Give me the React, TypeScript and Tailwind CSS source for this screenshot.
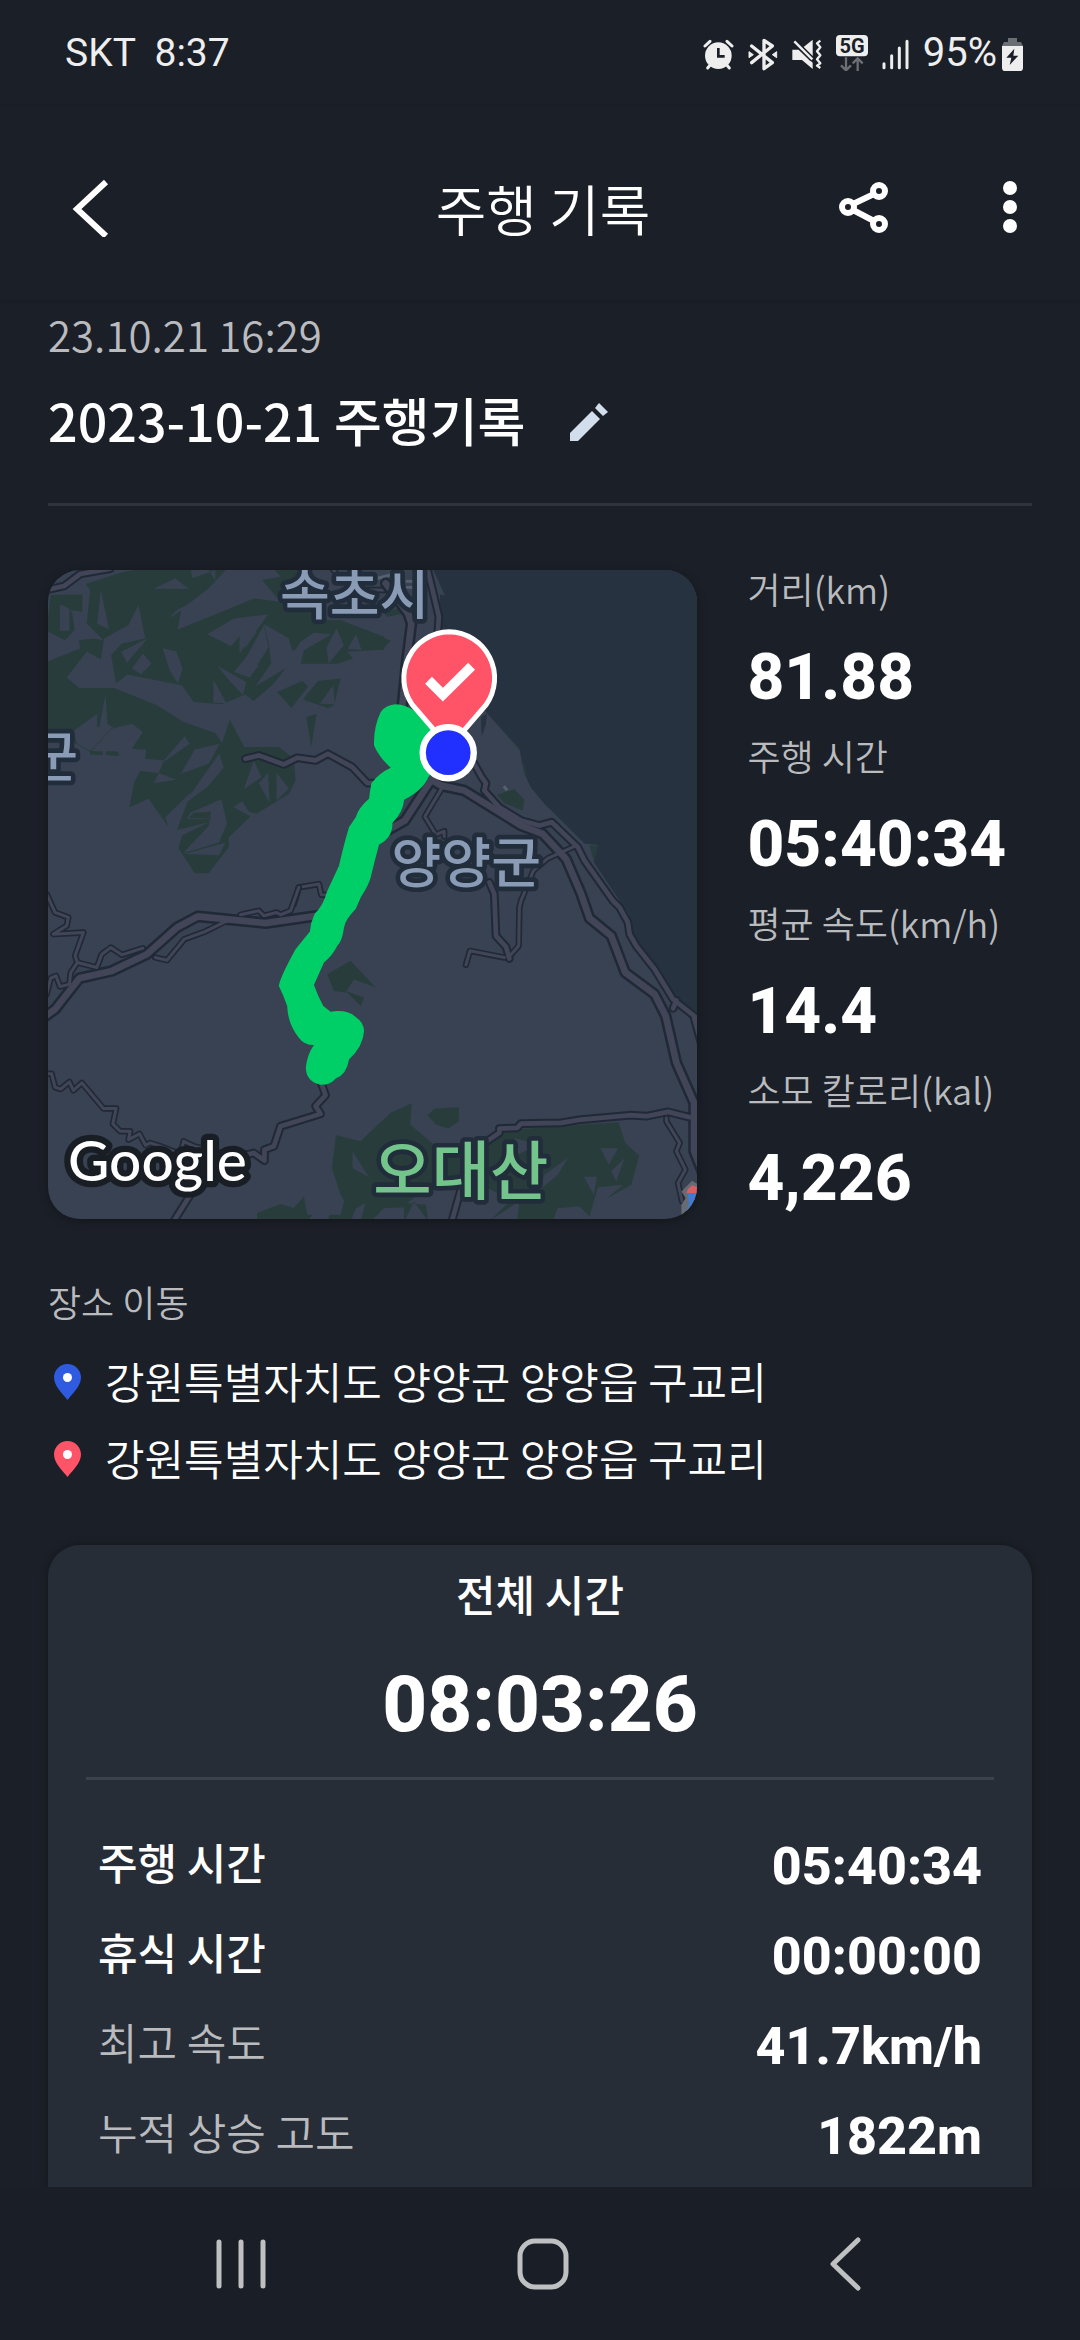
import type { ReactNode } from "react";

const KR = "font-['Noto_Sans_CJK_KR',sans-serif]";
const NUM = "font-['Roboto',sans-serif]";

const LAND = "#384252";
const SEA = "#263240";
const FOREST = "#283d3b";
const ROAD = "#424557";
const CASING = "#202936";

type Road = { d: string; size: "s" | "m" | "l" };

const casingWidth = { s: 19, m: 26, l: 35 };
const roadWidth = { s: 9, m: 14, l: 20 };

function Roads({ roads }: { roads: Road[] }) {
  return (
    <g fill="none" strokeLinejoin="round" strokeLinecap="round">
      {roads.map((r) => (
        <path key={"c" + r.d} d={r.d} stroke={CASING} strokeWidth={casingWidth[r.size]} />
      ))}
      {roads.map((r) => (
        <path key={"r" + r.d} d={r.d} stroke={ROAD} strokeWidth={roadWidth[r.size]} />
      ))}
    </g>
  );
}

const northWestRoads: Road[] = [
  { size: "m", d: "M10 92L72 78L120 42L210 26" },
  { size: "m", d: "M615 595L655 585L730 612L770 592L825 600L862 580L935 620L980 668L1030 668" },
  { size: "s", d: "M760 1030L775 980L835 970L842 1002L870 1003" },
  { size: "s", d: "M872 22L895 50L960 90L1040 90" },
];

const eastRoads: Road[] = [
  { size: "s", d: "M220 828V812L195 822L162 768L215 680" },
  { size: "s", d: "M615 855L530 893L487 930L450 1020L445 1040L443 1155L412 1190" },
  { size: "m", d: "M355 965L370 1000L375 1125L405 1158L415 1193" },
  { size: "s", d: "M285 1212L297 1170L400 1190" },
  { size: "l", d: "M45 70L112 160L122 190L108 300L93 450" },
  { size: "m", d: "M168 20L190 110L204 170L200 230" },
  { size: "l", d: "M180 660L102 780L40 815" },
  { size: "m", d: "M310 610L332 650L345 668L340 690L385 740L450 780L505 795L542 785L620 860L640 900L725 1020L745 1040L770 1085L775 1120L795 1155L850 1225L905 1315L985 1378" },
  { size: "m", d: "M915 1318L905 1342" },
  { size: "m", d: "M968 1370L990 1450" },
  { size: "l", d: "M150 640L210 675L280 690L450 795L515 820L585 895L630 1000L655 1072L720 1125L762 1235L850 1300L883 1365L915 1505L968 1625V1770L1000 1850" },
  { size: "m", d: "M345 1742L385 1715V1702L438 1700L450 1687L570 1685L630 1675L775 1662L825 1665L890 1652L955 1668" },
  { size: "s", d: "M885 1670V1680L925 1745L915 1770L942 1825L920 1865L932 1920" },
  { size: "m", d: "M268 1890L240 1990" },
];

const southWestRoads: Road[] = [
  { size: "s", d: "M20 10L45 65L85 80L80 105L40 130L130 125L105 195L112 215L92 245L88 280L60 287L48 255L32 262L20 310" },
  { size: "s", d: "M112 215L170 230L185 190L212 170L245 192L308 172" },
  { size: "s", d: "M345 200L380 208L432 145L495 122L560 90" },
  { size: "s", d: "M600 72L655 60L670 75L708 65L720 72L750 60L775 -10" },
  { size: "l", d: "M10 380L45 355L118 262L215 240L320 190L410 110L472 77L675 97L850 72" },
  { size: "s", d: "M15 548H35L45 588L62 594L88 572L100 598L125 575L190 652H228L218 698L240 720H270L265 745L298 728L316 762L330 755L360 765L420 788L430 750L462 765L560 790L640 785" },
  { size: "m", d: "M840 570L855 612L825 645L840 668L720 705L700 765L672 775V808L640 785L590 798" },
  { size: "m", d: "M450 910L400 990" },
];

function RouteMap() {
  return (
    <svg
      viewBox="0 0 1944 1944"
      className="block aspect-square w-full rounded-[32px]"
      role="img"
      aria-label="주행 경로 지도"
    >
      <rect width="1944" height="1944" fill={LAND} />

      {/* sea */}
      <g transform="translate(966 -30)">
        <path
          fill={SEA}
          d="M183 20L222 106L207 103L212 220L345 455L445 565L460 640L480 682L520 730L640 849L680 853L668 905L745 1020L773 1060L778 1110L850 1212L910 1310L1000 1380V0H183Z"
        />
        <path fill={FOREST} d="M345 455L445 563L448 572L395 512ZM456 600L470 655L458 635ZM378 703L430 686L460 718L455 750L400 728ZM-10 213L60 242L35 268L-10 268ZM40 160L90 140L100 160L50 170ZM655 855H680L668 903Z" />
        <path fill={SEA} d="M330 470L348 460L345 490L332 530Z" />
        <path fill="#55606f" d="M395 680L402 674L412 686L405 692ZM20 50L65 38V48L20 60ZM105 60H150V68H105ZM105 78H150V86H105Z" />
      </g>

      {/* northern forest */}
      <g transform="translate(-24 -30)">
        <path
          fill={FOREST}
          d="M137 72L240 38L300 26H560L505 85L440 135L410 150L385 175L422 152L412 208L545 155L640 115L720 125L665 60L720 50L700 26H800L860 180H900L1030 230V268L920 275L937 295L890 311H780L790 272L840 225H880L755 272L745 235L670 192L685 250L692 310L645 378L735 325L698 372L640 422L615 403L545 432L460 425L425 375L260 343L228 370L213 285L245 250L328 232L315 235L295 135L265 195L192 235L182 297L140 275L80 352L118 383H222L350 435L430 485L525 518L545 548L568 478L612 560H715L760 595L765 660L745 700L648 760L580 740L630 768L565 830V860L505 938H463L415 862L425 825L505 785L410 808L452 695L375 770L385 800L325 715L268 740L282 665L300 632L355 638L372 600L315 595L318 568L275 565L308 515L275 490L215 505L150 575L110 550L20 520V305L120 265L117 240L160 235L190 240L140 190L150 90Z"
        />
        <path fill={FOREST} d="M32 105L127 103V155L90 150L120 192L75 240L20 213ZM710 395L785 362L803 378L753 443ZM787 418L832 362L900 355L880 435L863 444ZM797 470L828 460L812 558ZM150 572L188 573V584L150 582ZM198 572L235 574V587L198 584ZM415 862L565 846L536 886L428 882Z" />
        <path
          fill={LAND}
          d="M182 90L207 208L171 190ZM60 133L88 145V212H60ZM95 150L120 192L105 212ZM340 86L405 55L446 87ZM452 30H505L525 62V30L456 55ZM243 275L322 235L260 308ZM275 325L308 280L334 310L303 342ZM367 264L408 274L427 325L413 370L388 330ZM500 222L580 175L683 163L597 280V228L572 258ZM597 228L650 214L615 262L597 242ZM670 196L684 262L652 312L620 290L655 315L628 352L580 335L618 290ZM530 316L617 365L608 404L570 365ZM519 358L558 428L519 427ZM888 204L909 255L864 311L858 262ZM946 222L963 270L921 266ZM790 270L760 275L780 245L820 218L873 222ZM838 430L878 374L882 432ZM196 403L202 490L220 504H177ZM100 512L171 461V500L215 503L150 572L110 548ZM367 605L433 528L448 550L372 603ZM463 567L538 550L505 610L422 640ZM536 580L550 622L500 680L425 735L455 695ZM340 668L356 638L408 658ZM452 755L543 716L560 788L536 846L428 878L505 796L508 774L440 772ZM512 754L460 757L440 776L510 776ZM640 600L663 650L610 686ZM655 668L683 637L687 727ZM708 637L745 684L708 720ZM432 880L555 846L536 884ZM578 740L606 722L632 765Z"
        />
      </g>

      {/* southern forest */}
      <g transform="translate(966 960)">
        <path
          fill={FOREST}
          d="M-10 730L60 665L123 636L118 700L195 765H320L400 715L475 712L640 700L742 693L762 755L804 793L780 880L705 923L755 880L680 888L655 975L625 945L560 950L545 990H438L445 930L360 985L420 925L330 880L250 890L200 860L110 935L165 940L172 990L130 930L100 990V948L40 950L0 990H-30L-16 935L-60 960L-90 910L-116 830L-104 732L-30 750ZM170 672L192 652L264 648V690L232 712L195 700ZM270 722L302 693Z"
        />
        <path fill={FOREST} d="M-340 965L-270 938L-230 950L-200 915L-190 970H-90L-80 930L-40 940L-60 990H-340ZM-130 250L-60 210L15 290L-50 265L-75 305L-110 300ZM-75 300L-20 320L-30 345Z" />
        <path fill={LAND} d="M687 770L740 772L713 820ZM638 856H677L668 910ZM520 850L590 800L560 850L500 900ZM-54 780L-5 858L-55 830ZM430 740L500 760L440 790ZM-190 990L-150 940L-100 900L-130 990ZM760 800L735 870L720 840Z" />
      </g>

      <g transform="translate(-24 -30)"><Roads roads={northWestRoads} /></g>
      <g transform="translate(-24 960)"><Roads roads={southWestRoads} /></g>
      <g transform="translate(966 -30)"><Roads roads={eastRoads} /></g>

      {/* place names */}
      <g
        className={KR}
        fontSize="162"
        fontWeight="500"
        fill="#8a9bb5"
        stroke="#222d3b"
        strokeWidth="28"
        strokeLinejoin="round"
        paintOrder="stroke"
      >
        <text x="918" y="136" textAnchor="middle">속초시</text>
        <text x="90" y="620" textAnchor="end">군</text>
        <text x="1252" y="936" textAnchor="middle">양양군</text>
        <text x="1236" y="1868" textAnchor="middle" fontSize="190" fill="#74c58b">오대산</text>
      </g>

      {/* ridden route */}
      <g transform="translate(966 -30)">
        <path
          fill="#00cf68"
          d="M75 432Q105 432 135 455L190 510L230 580L172 650Q160 685 100 718Q97 755 65 787Q66 832 25 852Q12 900 0 950Q-5 972 -30 1010L-45 1045Q-75 1075 -80 1100Q-85 1140 -100 1155Q-115 1185 -140 1205L-170 1272Q-158 1305 -142 1335L-120 1352Q-70 1345 -45 1368Q-20 1385 -20 1410Q-22 1455 -65 1495Q-72 1540 -105 1552Q-120 1572 -150 1571Q-195 1560 -194 1518Q-190 1480 -170 1452Q-200 1452 -215 1430Q-248 1390 -250 1335Q-262 1300 -275 1275Q-272 1250 -225 1165L-182 1112Q-180 1085 -168 1060Q-140 1030 -132 995L-95 915Q-80 850 -65 800L-45 770Q-35 740 -5 715Q-2 690 2 668Q25 638 60 622Q25 590 10 555Q8 500 30 455Q45 434 75 432Z"
        />
        <path
          fill="#ff5368"
          stroke="#fff"
          strokeWidth="15"
          d="M235 215A138.500 138.500 0 0 1 345 434L235 562L125 434A138.500 138.500 0 0 1 235 215Z"
        />
        <path fill="none" stroke="#fff" strokeWidth="29" d="M173 360L216 403L302 318" />
        <circle cx="232" cy="577" r="76.500" fill="#2230ff" stroke="#fff" strokeWidth="19" />
      </g>

      <text
        x="60"
        y="1829"
        className="font-['Lato',sans-serif]"
        fontSize="170"
        fontWeight="500"
        fill="#fff"
        stroke="#191e25"
        strokeWidth="38"
        strokeLinejoin="round"
        paintOrder="stroke"
      >
        Google
      </text>

      {/* highway shield cut by the map's corner */}
      <g transform="translate(966 960)">
        <path fill="#676b72" d="M930 900L962 868L990 885V990H930V940L943 920Z" />
        <path fill="#d85f63" d="M945 905Q948 893 962 882L990 892V908Z" />
        <path fill="#3f7bd0" d="M948 906H990V985H935L953 938Z" />
      </g>
    </svg>
  );
}

function StatusIcons() {
  return (
    <div className="flex items-center gap-3 text-[#eeeeee]" aria-hidden="true">
      <svg viewBox="60 39 96 108" className="h-9 w-8">
        <circle cx="106" cy="101" r="40" fill="currentColor" />
        <path d="M66 72L81 58M147 72L132 58" stroke="currentColor" strokeWidth="9" strokeLinecap="round" />
        <path d="M74 138L84 126M139 138L129 126" stroke="currentColor" strokeWidth="9" strokeLinecap="round" />
        <path d="M106 78V103H125" fill="none" stroke="#1a1e26" strokeWidth="8" />
      </svg>
      <svg viewBox="192 39 96 108" className="h-9 w-8">
        <path
          d="M206 72L268 122L243 140V55L268 72L206 122"
          fill="none"
          stroke="currentColor"
          strokeWidth="10"
          strokeLinejoin="round"
          strokeLinecap="round"
        />
        <path d="M198 89L211 98L198 107ZM281 89L268 98L281 107Z" fill="currentColor" stroke="currentColor" strokeWidth="3" />
      </svg>
      <svg viewBox="324 39 96 108" className="h-9 w-8">
        <path d="M361 76L389 53V104Z" fill="currentColor" />
        <path d="M328 83H347L389 122V141L357 114H328Z" fill="currentColor" />
        <path d="M334 58L388 112" stroke="#1a1e26" strokeWidth="16" />
        <path d="M334 58L388 112" stroke="currentColor" strokeWidth="7" />
        <path d="M412 56L402 64L412 76L402 88L412 100L402 112L412 124L402 131L412 138" fill="none" stroke="currentColor" strokeWidth="7" strokeLinejoin="round" />
      </svg>
      <svg viewBox="462 39 102 108" className="h-9 w-[34px]">
        <rect x="465" y="39" width="96" height="64" rx="12" fill="currentColor" />
        <text x="513" y="93" textAnchor="middle" fontSize="60" fontWeight="700" fill="#1a1e26" className="font-['Roboto',sans-serif]">5G</text>
        <path d="M495 106V143M480 130L495 145L510 130M530 147V112M515 124L530 109L545 124" fill="none" stroke="#6b6e73" strokeWidth="7" />
      </svg>
      <svg viewBox="597 39 90 108" className="h-9 w-[30px]">
        <path d="M606 125V137M629 101V137M652 78V137M675 58V137" stroke="currentColor" strokeWidth="9" strokeLinecap="round" />
      </svg>
      <div className="flex items-center gap-1">
        <span className={`${NUM} text-[40px] leading-[48px]`}>95%</span>
        <svg viewBox="960 39 69 108" className="h-9 w-[23px]">
          <path d="M981 48H1008V60H1020L1026 72H963L969 60H981Z" fill="#6b6e73" />
          <path d="M963 72H1026V137Q1026 147 1016 147H973Q963 147 963 137Z" fill="currentColor" />
          <path d="M1000 80L976 107H991L986 129L1012 101H997Z" fill="#1a1e26" />
        </svg>
      </div>
    </div>
  );
}

function PlacePin({ color }: { color: string }) {
  return (
    <svg viewBox="0 0 27 36" className="mt-1 h-9 w-[27px]" aria-hidden="true">
      <path fill={color} d="M13.500 0C6 0 0 6 0 13.500C0 22 8 29 13.500 36C19 29 27 22 27 13.500C27 6 21 0 13.500 0Z" />
      <circle cx="13.500" cy="13.500" r="4.500" fill="#fff" />
    </svg>
  );
}

function Metric({ label, value }: { label: string; value: string }) {
  return (
    <div className="flex flex-col gap-10">
      <dt className="text-[36px] leading-[36px] font-[350] whitespace-nowrap text-[#b9bbbe]">{label}</dt>
      <dd className={`${NUM} text-[64px] leading-[64px] font-extrabold`}>{value}</dd>
    </div>
  );
}

function DetailRow({ label, value, strong }: { label: string; value: string; strong?: boolean }) {
  return (
    <div className="flex h-[90px] items-center justify-between">
      <dt className={strong ? "text-[43px] leading-[56px] font-medium" : "text-[43px] leading-[56px] font-[350] text-[#b9bbbe]"}>
        {label}
      </dt>
      <dd className={`${NUM} pt-3 text-[52px] leading-[56px] font-extrabold`}>{value}</dd>
    </div>
  );
}

function NavButton({ label, children }: { label: string; children: ReactNode }) {
  return (
    <button type="button" aria-label={label} className="flex flex-1 items-center justify-center">
      <svg
        viewBox="0 0 56 56"
        className="size-14"
        fill="none"
        stroke="#bfc0c2"
        strokeWidth="5"
        strokeLinecap="round"
        strokeLinejoin="round"
      >
        {children}
      </svg>
    </button>
  );
}

const metrics = [
  { label: "거리(km)", value: "81.88" },
  { label: "주행 시간", value: "05:40:34" },
  { label: "평균 속도(km/h)", value: "14.4" },
  { label: "소모 칼로리(kal)", value: "4,226" },
];

const places = [
  { color: "#2f5be0", name: "강원특별자치도 양양군 양양읍 구교리" },
  { color: "#ff5368", name: "강원특별자치도 양양군 양양읍 구교리" },
];

const details = [
  { label: "주행 시간", value: "05:40:34", strong: true },
  { label: "휴식 시간", value: "00:00:00", strong: true },
  { label: "최고 속도", value: "41.7km/h" },
  { label: "누적 상승 고도", value: "1822m" },
];

export default function App() {
  return (
    <div className={`${KR} flex min-h-screen flex-col bg-[#1b1f27] text-white`}>
      <div className="flex h-[106px] items-center justify-between bg-[#1b1f27] pr-14 pl-[65px] text-[#eeeeee]">
        <span className={`${NUM} text-[39px] leading-[48px] whitespace-pre`}>SKT  8:37</span>
        <StatusIcons />
      </div>

      <header className="grid h-[194px] grid-cols-[1fr_auto_1fr] items-center pt-2 pr-14 pl-[62px] shadow-[0_1px_4px_rgba(0,0,0,0.15)]">
        <button type="button" aria-label="뒤로" className="w-14">
          <svg viewBox="0 0 56 60" className="h-[60px] w-14" fill="none" stroke="#fff" strokeWidth="6">
            <path d="M44 5L15 32L44 59" />
          </svg>
        </button>
        <h1 className="text-[55px] leading-[72px] font-[350]">주행 기록</h1>
        <div className="flex items-center justify-end gap-[106px]">
          <button type="button" aria-label="공유">
            <svg viewBox="0 0 52 52" className="size-[52px]" fill="none" stroke="#fff" strokeWidth="6">
              <circle cx="10" cy="26" r="6" />
              <circle cx="41" cy="10" r="6" />
              <circle cx="41" cy="43" r="6" />
              <path d="M15 23L36 13M15 29L36 40" />
            </svg>
          </button>
          <button type="button" aria-label="더보기">
            <svg viewBox="0 0 28 52" className="h-[52px] w-7" fill="#fff">
              <circle cx="14" cy="7" r="7" />
              <circle cx="14" cy="26" r="7" />
              <circle cx="14" cy="45" r="7" />
            </svg>
          </button>
        </div>
      </header>

      <main className="flex flex-1 flex-col px-12 pt-2">
        <time className="text-[42px] leading-[52px] font-[350] text-[#b9bbbe]">23.10.21 16:29</time>
        <div className="mt-7 flex items-center gap-11">
          <h2 className="text-[52px] leading-[64px] font-medium">2023-10-21 주행기록</h2>
          <button type="button" aria-label="제목 수정" className="pt-1">
            <svg viewBox="0 0 40 40" className="size-10" fill="#d3deec">
              <path d="M1 31L23 9L31 17L9 39H1Z" />
              <path d="M26 6L30 1L39 10L34 14Z" />
            </svg>
          </button>
        </div>
        <hr className="mt-[51px] border-t-[3px] border-[#2f343c]" />

        <section className="mt-16 flex items-start gap-[50px]">
          <div className="w-[66%] shrink-0 rounded-[32px] shadow-[0_2px_10px_rgba(0,0,0,0.3)]">
            <RouteMap />
          </div>
          <dl className="flex flex-col gap-[27px]">
            {metrics.map((m) => (
              <Metric key={m.label} {...m} />
            ))}
          </dl>
        </section>

        <section className="mt-[58px]">
          <h3 className="mb-4 text-[36px] leading-[48px] font-[350] text-[#b9bbbe]">장소 이동</h3>
          <ul>
            {places.map((p) => (
              <li key={p.color} className="flex h-[77px] items-center gap-6 pl-1.5">
                <PlacePin color={p.color} />
                <span className="text-[43px] leading-[56px] font-[350]">{p.name}</span>
              </li>
            ))}
          </ul>
        </section>

        <section className="mt-[50px] flex-1 rounded-t-[32px] bg-[#272d37] px-[38px] pt-5 pb-2 shadow-[0_0_8px_rgba(0,0,0,0.3)]">
          <h3 className="text-center text-[43px] leading-[56px] font-medium">전체 시간</h3>
          <p className={`${NUM} mt-9 text-center text-[78px] leading-[96px] font-extrabold`}>08:03:26</p>
          <hr className="mt-6 border-t-[3px] border-[#3b424b]" />
          <dl className="mt-9 px-3">
            {details.map((d) => (
              <DetailRow key={d.label} {...d} />
            ))}
          </dl>
        </section>
      </main>

      <nav className="relative flex h-[153px] bg-[#1a1e26] pr-[84px] pl-[90px]">
        <NavButton label="최근 앱">
          <path d="M6 6V50M28 6V50M50 6V50" />
        </NavButton>
        <NavButton label="홈">
          <rect x="5" y="5" width="46" height="46" rx="15" />
        </NavButton>
        <NavButton label="뒤로">
          <path d="M41 4L16 28L41 52" />
        </NavButton>
      </nav>
    </div>
  );
}
